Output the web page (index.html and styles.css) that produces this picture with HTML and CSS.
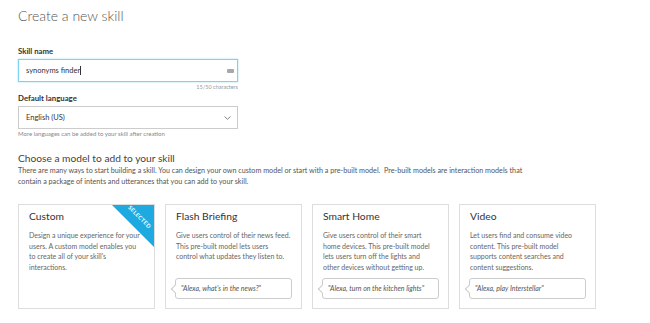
FILE: index.html
```html
<!DOCTYPE html>
<html lang="en">
<head>
    <meta charset="UTF-8">
    <title>Create a new skill</title>
    <link rel="stylesheet" href="styles.css">
</head>
<body>
    <div class="page">
        <h1 class="page-title">Create a new skill</h1>

        <div class="field">
            <label class="field-label">Skill name</label>
            <div class="text-input active">
                <span class="input-value">synonyms finder<span class="caret"></span></span>
                <span class="kbd-icon"></span>
            </div>
            <div class="char-count">15/50 characters</div>
        </div>

        <div class="field lang-field">
            <label class="field-label">Default language</label>
            <div class="text-input">
                <span class="input-value">English (US)</span>
                <svg class="chevron" width="7" height="4" viewBox="0 0 7 4">
                    <path d="M0.5 0.5 L3.5 3.3 L6.5 0.5" fill="none" stroke="#777" stroke-width="0.9"/>
                </svg>
            </div>
            <div class="hint">More languages can be added to your skill after creation</div>
        </div>

        <h2 class="section-title">Choose a model to add to your skill</h2>
        <p class="section-text">There are many ways to start building a skill. You can design your own custom model or start with a pre-built model.&nbsp; Pre-built models are interaction models that contain a package of intents and utterances that you can add to your skill.</p>

        <div class="cards">
            <div class="card selected">
                <div class="ribbon"></div>
                <span class="ribbon-text">SELECTED</span>
                <div class="card-title">Custom</div>
                <div class="card-text">Design a unique experience for your<br>users. A custom model enables you<br>to create all of your skill's<br>interactions.</div>
            </div>
            <div class="card">
                <div class="card-title">Flash Briefing</div>
                <div class="card-text">Give users control of their news feed.<br>This pre-built model lets users<br>control what updates they listen to.</div>
                <div class="bubble">"Alexa, what's in the news?"</div>
            </div>
            <div class="card">
                <div class="card-title">Smart Home</div>
                <div class="card-text">Give users control of their smart<br>home devices. This pre-built model<br>lets users turn off the lights and<br>other devices without getting up.</div>
                <div class="bubble">"Alexa, turn on the kitchen lights"</div>
            </div>
            <div class="card">
                <div class="card-title">Video</div>
                <div class="card-text">Let users find and consume video<br>content. This pre-built model<br>supports content searches and<br>content suggestions.</div>
                <div class="bubble">"Alexa, play Interstellar"</div>
            </div>
        </div>
    </div>
</body>
</html>
```

FILE: styles.css
```css
body {
    margin: 0;
    padding: 0;
    font-family: 'Lato', sans-serif;
    color: #444;
    background: #fff;
}
.page {
    padding: 6px 18px 0 18px;
}
.page-title {
    margin: 0;
    font-size: 14px;
    font-weight: 300;
    line-height: 20px;
    color: #555;
}
.field {
    width: 220px;
    margin-top: 20px;
}
.lang-field {
    margin-top: 2px;
}
.field-label {
    display: block;
    font-size: 7.8px;
    font-weight: 700;
    line-height: 10px;
    color: #333;
    margin-bottom: 3px;
}
.text-input {
    height: 23px;
    box-sizing: border-box;
    border: 1px solid #ccc;
    display: flex;
    align-items: center;
    justify-content: space-between;
    padding: 0 6px 0 7px;
    font-size: 7.5px;
    color: #333;
}
.text-input.active {
    border-color: #7dd3ee;
    box-shadow: 0 0 2px #a6e2f6;
}
.caret {
    display: inline-block;
    width: 1px;
    height: 9px;
    background: #333;
    vertical-align: -2px;
}
.kbd-icon {
    width: 7px;
    height: 4px;
    margin-right: -3px;
    background: #a8a8a8;
    border-radius: 1px;
}
.char-count {
    text-align: right;
    font-size: 5.5px;
    color: #999;
    line-height: 7px;
    margin-top: 2px;
}
.hint {
    font-size: 6px;
    color: #888;
    line-height: 8px;
    margin-top: 1px;
}
.section-title {
    margin: 13px 0 0 0;
    font-size: 10.2px;
    font-weight: 400;
    line-height: 14px;
    color: #444;
}
.section-text {
    margin: 0;
    width: 520px;
    font-size: 7.2px;
    line-height: 11px;
    color: #555;
}
.cards {
    display: flex;
    gap: 10px;
    margin-top: 17px;
}
.card {
    position: relative;
    width: 137px;
    height: 105px;
    box-sizing: border-box;
    border: 1px solid #ddd;
    padding: 4px 2px 0 10px;
    overflow: hidden;
}
.card-title {
    font-size: 10.3px;
    line-height: 14px;
    color: #333;
}
.card-text {
    margin-top: 7px;
    font-size: 7px;
    line-height: 10.5px;
    color: #666;
    white-space: nowrap;
}
.ribbon {
    position: absolute;
    top: 0;
    right: 0;
    width: 42px;
    height: 42px;
    background: #1fa9e1;
    clip-path: polygon(0 0, 100% 0, 100% 100%);
}
.ribbon-text {
    position: absolute;
    top: 12px;
    right: 14px;
    transform: translate(50%, -50%) rotate(45deg);
    font-size: 5.5px;
    font-weight: 700;
    color: #fff;
    letter-spacing: 0.4px;
    white-space: nowrap;
}
.bubble {
    position: absolute;
    left: 9px;
    top: 73px;
    width: 117px;
    height: 21px;
    box-sizing: border-box;
    border: 1px solid #ccc;
    border-radius: 3px;
    padding: 0 5px;
    font-size: 7px;
    font-style: italic;
    line-height: 19px;
    color: #555;
    background: #fff;
}
.bubble::before {
    content: '';
    position: absolute;
    left: -4px;
    top: 7px;
    width: 5px;
    height: 5px;
    background: #fff;
    border-left: 1px solid #ccc;
    border-bottom: 1px solid #ccc;
    transform: rotate(45deg);
}
```
